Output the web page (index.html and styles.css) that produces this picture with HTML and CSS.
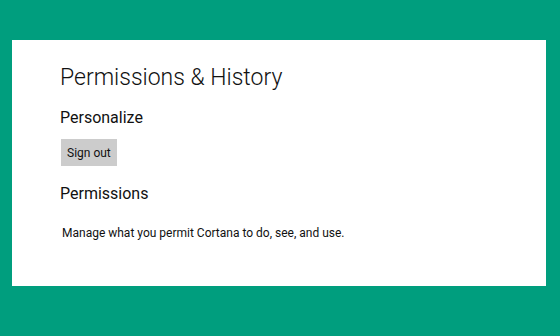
FILE: index.html
```html
<!DOCTYPE html>
<html lang="en">
  <head>
    <meta charset="UTF-8" />
    <title>Permissions &amp; History</title>
    <link rel="stylesheet" href="styles.css">
  </head>
  <body>
    <div class="panel">
      <h1 class="title">Permissions &amp; History</h1>
      <h2 class="section">Personalize</h2>
      <button class="btn">Sign out</button>
      <h2 class="section section-gap">Permissions</h2>
      <p class="desc">Manage what you permit Cortana to do, see, and use.</p>
    </div>
  </body>
</html>
```

FILE: styles.css
```css
html, body {
  margin: 0;
  padding: 0;
  height: 100%;
}

body {
  background-color: #009e7e;
  font-family: "Roboto", "Noto Sans", sans-serif;
  color: #111;
  padding: 40px 14px 50px 12px;
  box-sizing: border-box;
}

.panel {
  background-color: #fff;
  height: 246px;
  padding: 23px 48px 0 48px;
  box-sizing: border-box;
  display: flex;
  flex-direction: column;
  align-items: flex-start;
}

.title {
  font-size: 23px;
  font-weight: 300;
  margin: 0;
  line-height: 30px;
}

.section {
  font-size: 16px;
  font-weight: 400;
  margin: 13px 0 0 0;
  line-height: 24px;
}

.section-gap {
  margin-top: 16px;
}

.btn {
  margin: 9px 0 0 1px;
  padding: 0 6px;
  height: 27px;
  background-color: #cccccc;
  border: none;
  font-family: inherit;
  font-size: 12px;
  color: #111;
}

.desc {
  font-size: 12px;
  margin: 20px 0 0 2px;
}
```
